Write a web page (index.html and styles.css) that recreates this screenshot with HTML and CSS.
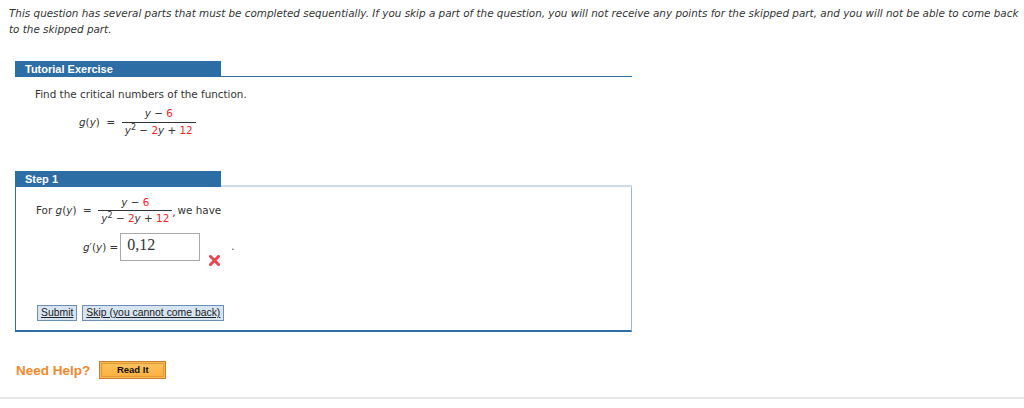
FILE: index.html
```html
<!DOCTYPE html>
<html>
<head>
<meta charset="utf-8">
<link rel="stylesheet" href="styles.css">
</head>
<body>
<div class="page">
  <p class="intro">This question has several parts that must be completed sequentially. If you skip a part of the question, you will not receive any points for the skipped part, and you will not be able to come back to the skipped part.</p>

  <div class="section tutorial">
    <div class="head"><div class="tab">Tutorial Exercise</div><div class="rule"></div></div>
    <div class="tut-body">
      <p class="prompt">Find the critical numbers of the function.</p>
      <div class="eq eq-main">
        <span class="m">g</span>(<span class="m">y</span>)&nbsp; = &nbsp;<span class="frac"><span class="num"><span class="m">y</span> − <span class="r">6</span></span><span class="den"><span class="m">y</span><sup>2</sup> − <span class="r">2</span><span class="m">y</span> + <span class="r">12</span></span></span>
      </div>
    </div>
  </div>

  <div class="section step">
    <div class="head"><div class="tab">Step 1</div><div class="rule light"></div></div>
    <div class="step-body">
      <div class="eq eq-for">
        For&nbsp; <span class="m">g</span>(<span class="m">y</span>)&nbsp; = &nbsp;<span class="frac small"><span class="num"><span class="m">y</span> − <span class="r">6</span></span><span class="den"><span class="m">y</span><sup>2</sup> − <span class="r">2</span><span class="m">y</span> + <span class="r">12</span></span></span><span class="comma">,</span> we have
      </div>
      <div class="answer">
        <span class="lbl"><span class="m">g</span>′(<span class="m">y</span>) =</span>
        <span class="box">0,12</span>
        <svg class="x" width="11" height="11" viewBox="0 0 11 11"><path d="M1.5 1.5 L9.5 9.5 M9.5 1.5 L1.5 9.5" stroke="#e8454f" stroke-width="3" stroke-linecap="square"/></svg>
        <span class="dot">.</span>
      </div>
      <div class="btns">
        <span class="btn">Submit</span>
        <span class="btn">Skip (you cannot come back)</span>
      </div>
    </div>
  </div>

  <div class="help">
    <span class="need">Need Help?</span>
    <span class="read"><span>Read It</span></span>
  </div>
</div>
</body>
</html>
```
FILE: styles.css
```css
html, body { margin: 0; padding: 0; background: #fff; }
body { font-family: "DejaVu Sans", Verdana, sans-serif; font-size: 11px; color: #333; }
.page { padding: 5px 0 0 9px; height: 392px; border-bottom: 2px solid #e6e6e6; width: 1015px; box-sizing: content-box; }
.intro { margin: 0 -8px 0 0; font-style: italic; line-height: 16px; font-size: 10.4px; color: #333; }
.section { margin-left: 6px; width: 617px; }
.tutorial { margin-top: 24px; }
.head { display: flex; align-items: flex-end; height: 16px; }
.tab { width: 196px; height: 16px; line-height: 16px; padding-left: 10px; background: #2d6da5; color: #fff; font-family: "Liberation Sans", Arial, sans-serif; font-weight: bold; font-size: 11px; }
.rule { flex: 1; border-bottom: 1px solid #2d6da5; }
.rule.light { border-bottom: 2px solid #cfdbe8; }
.tut-body { padding: 10px 0 0 20px; }
.prompt { margin: 0; line-height: 14px; font-size: 10.4px; }
.eq { display: flex; align-items: center; font-size: 10.4px; }
.eq-main { margin: 5px 0 0 44px; }
.m { font-style: italic; }
.r { color: #ff1d1d; }
.frac { display: inline-flex; flex-direction: column; align-items: center; }
.num { padding: 1px 2px 2px; border-bottom: 1px solid #333; line-height: 13px; text-align: center; width: 100%; box-sizing: border-box; }
.den { line-height: 13px; padding: 1px 3px 0; }
.den sup { font-size: 8px; line-height: 0; vertical-align: 4px; }
.step { margin-top: 34px; }
.step-body { border-left: 1px solid #2d6da5; border-bottom: 2px solid #2d6da5; border-right: 1px solid #9fb7cf; height: 145px; padding: 8px 0 0 20px; box-sizing: border-box; }
.frac.small .num, .frac.small .den { line-height: 12px; }
.comma { align-self: flex-end; margin-bottom: 6px; margin-right: 2px; }
.answer { display: flex; align-items: flex-start; margin: 9px 0 0 47px; height: 36px; }
.lbl { margin-top: 8px; font-size: 10.4px; }
.box { margin-left: 2px; width: 72px; height: 26px; border: 1px solid #a9a9a9; font-family: "Liberation Serif", "Times New Roman", serif; font-size: 16px; line-height: 22px; padding-left: 6px; }
.x { margin: 22px 0 0 9px; }
.dot { margin: 8px 0 0 11px; font-size: 10px; }
.btns { display: flex; gap: 5px; margin: 36px 0 0 1px; }
.btn { display: inline-block; height: 14px; line-height: 14px; padding: 0 3px; border: 1px solid #6b8fb5; background: #d7e4f1; color: #222; font-family: "Liberation Sans", Arial, sans-serif; font-size: 10.4px; text-decoration: underline; }
.help { display: flex; align-items: center; margin: 29px 0 0 7px; gap: 9px; }
.need { font-family: "Liberation Sans", Arial, sans-serif; font-weight: bold; font-size: 13.5px; color: #f5882a; }
.read { display: inline-block; border: 1px solid #c97f2f; padding: 1px; background: #fdba4f; }
.read span { display: block; width: 61px; height: 12px; line-height: 12px; border: 1px solid #e09a3a; text-align: center; font-family: "Liberation Sans", Arial, sans-serif; font-weight: bold; font-size: 9.5px; color: #111; background: linear-gradient(#fdc25c, #fbb040); }
```
